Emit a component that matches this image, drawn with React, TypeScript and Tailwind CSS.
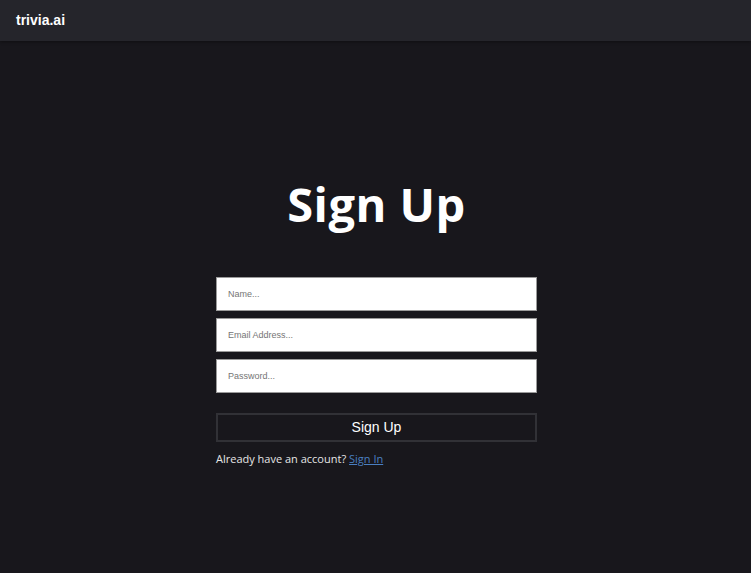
import React from "react";

export default function App() {
  return (
    <div className="min-h-[573px] bg-[#18171c] font-['Liberation_Sans',Arial,sans-serif]">
      {/* Header */}
      <header className="h-[41px] bg-[#25252b] flex items-center px-4 shadow-[0_1px_3px_rgba(0,0,0,0.4)]">
        <span className="text-white font-bold text-[14px]">trivia.ai</span>
      </header>

      {/* Form */}
      <main className="flex flex-col items-center pt-[140px] pl-[2px]">
        <h1 className="text-white font-['Open_Sans',sans-serif] font-bold text-[47px] leading-none tracking-[0.5px]">
          Sign Up
        </h1>

        <form className="w-[321px] mt-[49px] flex flex-col">
          <div className="flex flex-col gap-[7px]">
            <input
              type="text"
              placeholder="Name..."
              className="h-[34px] w-full bg-white border border-[#9a9a9a] px-[11px] text-[9px] text-black placeholder:text-[#757575] outline-none"
            />
            <input
              type="email"
              placeholder="Email Address..."
              className="h-[34px] w-full bg-white border border-[#9a9a9a] px-[11px] text-[9px] text-black placeholder:text-[#757575] outline-none"
            />
            <input
              type="password"
              placeholder="Password..."
              className="h-[34px] w-full bg-white border border-[#9a9a9a] px-[11px] text-[9px] text-black placeholder:text-[#757575] outline-none"
            />
          </div>

          <button
            type="button"
            className="mt-[20px] h-[29px] w-full border-2 border-[#313136] bg-transparent text-white text-[14px]"
          >
            Sign Up
          </button>

          <p className="mt-[9px] text-[11px] text-[#e6e6e6] font-['Open_Sans',sans-serif]">
            Already have an account?{" "}
            <a href="#" className="text-[#4a7fc0] underline">
              Sign In
            </a>
          </p>
        </form>
      </main>
    </div>
  );
}
